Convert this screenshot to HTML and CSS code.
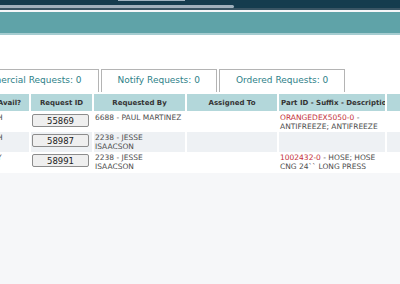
FILE: index.html
```html
<!DOCTYPE html>
<html lang="en">
<head>
    <meta charset="UTF-8">
    <meta name="viewport" content="width=device-width, initial-scale=1.0">
    <title>Requests</title>
    <link rel="stylesheet" href="styles.css">
</head>
<body>
    <div class="topbar">
        <div class="topbar-field"></div>
        <div class="topbar-scroll"></div>
    </div>
    <div class="band"></div>
    <div class="panel">
        <div class="tabs">
            <div class="tab">Commercial Requests: 0</div>
            <div class="tab">Notify Requests: 0</div>
            <div class="tab">Ordered Requests: 0</div>
        </div>
        <table class="requests">
            <thead>
                <tr>
                    <th class="col-avail">Avail?</th>
                    <th class="col-id">Request ID</th>
                    <th class="col-by">Requested By</th>
                    <th class="col-to">Assigned To</th>
                    <th class="col-part">Part ID - Suffix - Description</th>
                    <th class="col-extra">Qty</th>
                </tr>
            </thead>
            <tbody>
                <tr>
                    <td class="avail">H</td>
                    <td><input class="request-id" type="text" value="55869" readonly></td>
                    <td>6688 - PAUL MARTINEZ</td>
                    <td></td>
                    <td><span class="part-id">ORANGEDEX5050-0</span> - ANTIFREEZE; ANTIFREEZE</td>
                    <td></td>
                </tr>
                <tr class="alt">
                    <td class="avail">H</td>
                    <td><input class="request-id" type="text" value="58987" readonly></td>
                    <td>2238 - JESSE ISAACSON</td>
                    <td></td>
                    <td></td>
                    <td></td>
                </tr>
                <tr>
                    <td class="avail">Y</td>
                    <td><input class="request-id" type="text" value="58991" readonly></td>
                    <td>2238 - JESSE ISAACSON</td>
                    <td></td>
                    <td><span class="part-id">1002432-0</span> - HOSE; HOSE CNG 24`` LONG PRESS</td>
                    <td></td>
                </tr>
            </tbody>
        </table>
    </div>
</body>
</html>
```

FILE: styles.css
```css
:root {
    --navy: #153c4e;
    --teal: #5fa3a8;
    --head-bg: #b3d7da;
    --tab-text: #2e7f88;
    --text-color: #4d4d4d;
    --page-bg: #f6f7f9;
}
body {
    margin: 0;
    font-family: 'DejaVu Sans', Verdana, sans-serif;
    background-color: var(--page-bg);
    color: var(--text-color);
    overflow: hidden;
}
.topbar {
    height: 8px;
    background-color: var(--navy);
    border-bottom: 2px solid #3a5564;
    position: relative;
}
.topbar-field {
    position: absolute;
    left: 118px;
    top: 0;
    width: 67px;
    height: 1px;
    background-color: #9fb3c0;
}
.topbar-scroll {
    position: absolute;
    left: 0;
    top: 5px;
    width: 234px;
    height: 3px;
    border-radius: 0 2px 2px 0;
    background-color: #a1b1bd;
}
.band {
    margin-top: 2px;
    height: 21px;
    background-color: var(--teal);
    border-bottom: 2px solid #a5ccd0;
}
.panel {
    background-color: white;
    padding: 34px 0 1px;
}
.tabs {
    display: flex;
    gap: 2px;
    margin-left: -45px;
    margin-bottom: 2px;
}
.tab {
    height: 22px;
    line-height: 21px;
    padding: 0 16px;
    border: 1px solid #b4b4b4;
    border-bottom: none;
    background-color: white;
    color: var(--tab-text);
    font-size: 9px;
    white-space: nowrap;
}
.requests {
    width: 491px;
    margin-left: -12px;
    table-layout: fixed;
    border-collapse: separate;
    border-spacing: 2px 0;
    font-size: 7.5px;
}
.requests th {
    box-sizing: border-box;
    height: 18px;
    padding: 0 2px;
    background-color: var(--head-bg);
    color: #333;
    font-size: 7px;
    font-weight: bold;
    text-align: center;
    white-space: nowrap;
    overflow: hidden;
    border-bottom: 1px solid white;
}
.col-avail { width: 39px; }
.col-id { width: 61px; }
.col-by { width: 91px; }
.col-to { width: 90px; }
.col-part { width: 106px; }
.col-extra { width: 90px; }
.requests td {
    padding: 2px 1px 1px;
    line-height: 8.5px;
    vertical-align: top;
    height: 17px;
}
.requests td.avail {
    padding-left: 7px;
}
.requests tr.alt td {
    background-color: #eef1f4;
}
.request-id {
    box-sizing: border-box;
    display: block;
    width: 57px;
    height: 13px;
    margin: 0;
    padding: 0;
    border: 1px solid #8c8c8c;
    border-radius: 2px;
    background-color: #efefef;
    color: #222;
    font-family: 'DejaVu Sans', Verdana, sans-serif;
    font-size: 8.5px;
    text-align: center;
}
.part-id {
    color: #c4303a;
}
```
